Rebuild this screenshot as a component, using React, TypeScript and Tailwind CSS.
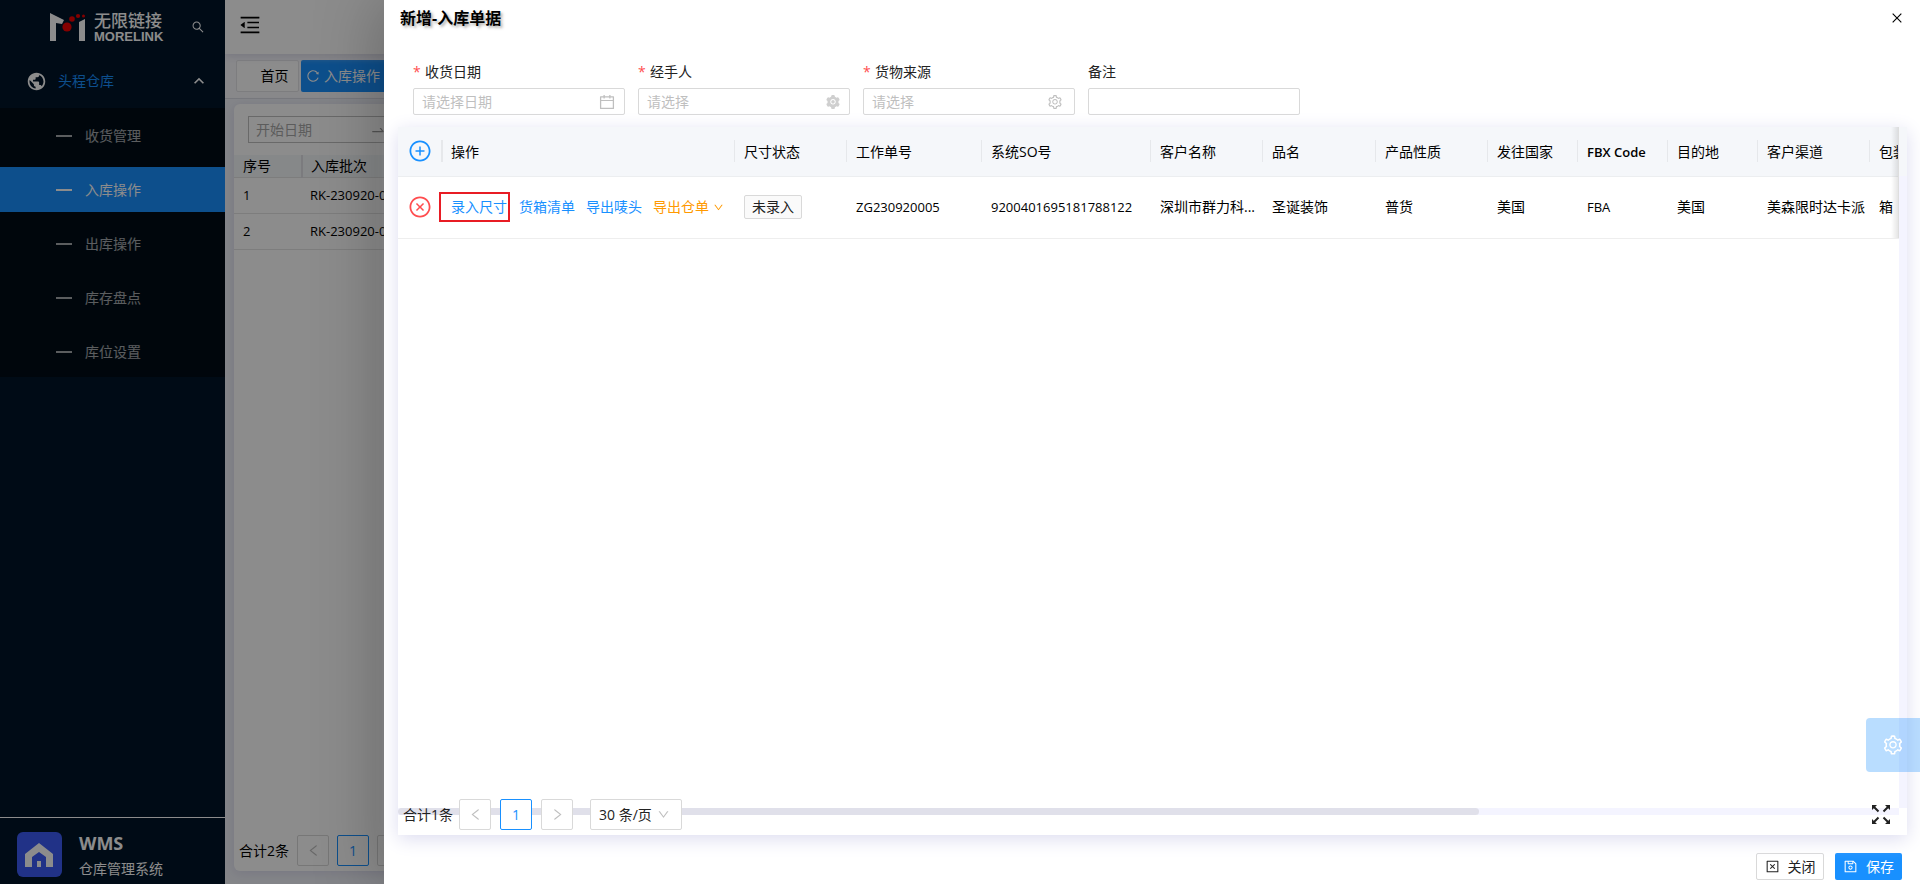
import type { ReactNode } from "react";
import {
  AiFillSetting,
  AiOutlineCalendar,
  AiOutlineClose,
  AiOutlineCloseCircle,
  AiOutlineCloseSquare,
  AiOutlineDown,
  AiOutlineLeft,
  AiOutlineMenuFold,
  AiOutlinePlusCircle,
  AiOutlineReload,
  AiOutlineRight,
  AiOutlineSave,
  AiOutlineSearch,
  AiOutlineSetting,
  AiOutlineSwapRight,
} from "react-icons/ai";
import { MdExpandLess, MdPublic } from "react-icons/md";

const menu = ["收货管理", "入库操作", "出库操作", "库存盘点", "库位设置"];

const columns = [
  { title: "尺寸状态", col: "w-[112px]" },
  { title: "工作单号", col: "w-[135px]", value: "ZG230920005" },
  { title: "系统SO号", col: "w-[169px]", value: "9200401695181788122" },
  { title: "客户名称", col: "w-[112px]", value: "深圳市群力科..." },
  { title: "品名", col: "w-[113px]", value: "圣诞装饰" },
  { title: "产品性质", col: "w-[112px]", value: "普货" },
  { title: "发往国家", col: "w-[90px]", value: "美国" },
  { title: "FBX Code", col: "w-[90px]", value: "FBA" },
  { title: "目的地", col: "w-[90px]", value: "美国" },
  { title: "客户渠道", col: "w-[112px]", value: "美森限时达卡派" },
  { title: "包装", col: "w-[112px]", value: "箱" },
];

function isLatin(text: string) {
  return /^[\w ]+$/.test(text);
}

function Logo() {
  return (
    <div className="flex items-center gap-2 text-white">
      <svg viewBox="0 0 36 28" className="h-7 w-9" fill="currentColor">
        <path d="M0 0 L14 7 L12 11 L6 10 V28 H0 Z" />
        <path d="M29 9 L35 6 V28 H29 Z" />
        <g fill="#f00000">
          <circle cx="17" cy="14" r="4.6" />
          <circle cx="22" cy="6" r="2.8" />
          <circle cx="28" cy="3" r="2.1" />
          <circle cx="33.5" cy="3" r="1.5" />
        </g>
      </svg>
      <div className="flex flex-col">
        <span className="text-[17px] leading-[18px] font-medium">无限链接</span>
        <span className="font-['Liberation_Sans'] text-[13px] leading-[13px] font-bold">
          MORELINK
        </span>
      </div>
    </div>
  );
}

function HomeIcon() {
  return (
    <svg viewBox="0 0 45 45" className="h-[45px] w-[45px] rounded-md bg-[#3c5cf6]">
      <path
        fill="#fff"
        d="M22 11 L36 22 V35 H29 V25 L22 20 L15 25 V35 H8 V22 Z M20 29 H24 V35 H20 Z"
      />
    </svg>
  );
}

function FullscreenIcon() {
  return (
    <svg viewBox="0 0 18 19" className="h-[19px] w-[18px]" fill="none" stroke="#222" strokeWidth="2">
      <path d="M2 2 L6.500 6.500 M16 2 L11.500 6.500 M2 17 L6.500 12.500 M16 17 L11.500 12.500" />
      <path
        fill="#222"
        stroke="none"
        d="M0 0 H5 L0 5 Z M18 0 V5 L13 0 Z M0 19 V14 L5 19 Z M18 19 H13 L18 14 Z"
      />
    </svg>
  );
}

function Sidebar() {
  return (
    <aside className="relative z-20 flex w-[225px] shrink-0 flex-col bg-[#001529] text-white">
      <div className="flex h-[54px] items-center justify-between pr-5 pl-[50px]">
        <Logo />
        <button aria-label="搜索">
          <AiOutlineSearch size={14} />
        </button>
      </div>
      <button className="flex h-[54px] items-center pr-4 pl-[26px] text-left text-[#1890ff]">
        <MdPublic size={21} className="text-white" />
        <span className="ml-[11px] flex-1">头程仓库</span>
        <MdExpandLess size={20} className="text-white" />
      </button>
      <nav className="flex flex-col gap-[9px] bg-[#000c17] pt-[5px] pb-[3px]">
        {menu.map((item) => (
          <a
            key={item}
            href="#"
            className={
              item === "入库操作"
                ? "flex h-[45px] items-center gap-[13px] bg-[#1890ff] pl-14 text-white"
                : "flex h-[45px] items-center gap-[13px] pl-14 text-white/65"
            }
          >
            <span className="h-[2px] w-4 bg-current" />
            {item}
          </a>
        ))}
      </nav>
      <div className="mt-auto flex items-start gap-[17px] border-t border-white px-[17px] pt-[14px] pb-[2px]">
        <HomeIcon />
        <div>
          <div className="text-[18px] leading-[23px] font-bold">WMS</div>
          <div className="leading-[27px]">仓库管理系统</div>
        </div>
      </div>
    </aside>
  );
}

function Workspace() {
  return (
    <main className="flex min-w-0 flex-1 flex-col bg-[#f0f2f8] text-black">
      <header className="z-10 flex h-[54px] items-center bg-white px-[13px] shadow-[0_2px_8px_#d8d8e8]">
        <button aria-label="收起菜单" className="-mt-1">
          <AiOutlineMenuFold size={24} />
        </button>
      </header>
      <div className="flex h-[45px] items-center gap-[2px] border-b border-[#d9dbe3] bg-[#f8f8fc] px-[11px]">
        <button className="h-8 w-[63px] rounded-[2px] border border-[#e4e4e8] bg-white pl-[14px]">首页</button>
        <button className="flex h-8 w-[110px] items-center gap-1 rounded-[2px] bg-[#1890ff] px-[5px] whitespace-nowrap text-white">
          <AiOutlineReload size={14} />
          入库操作
        </button>
      </div>
      <section className="mx-[9px] mt-[5px] mb-[13px] flex flex-1 flex-col rounded-md bg-white shadow-[0_2px_12px_#d8d8ec]">
        <div className="mt-3 ml-[14px] flex h-[27px] w-[230px] items-center border border-[#bfbfbf] px-[7px]">
          <input
            aria-label="开始日期"
            placeholder="开始日期"
            className="w-[114px] bg-transparent outline-none placeholder:text-[#a8a8a8]"
          />
          <AiOutlineSwapRight size={16} className="text-[#999]" />
        </div>
        <table className="mt-3 w-full table-fixed text-left">
          <thead>
            <tr className="h-[22px] border-b border-[#e4e4e4] bg-[#f5f7fa]">
              <th className="w-[68px] border-r-2 border-[#e0e0e6] pl-[9px] leading-5 font-normal">序号</th>
              <th className="pl-2 leading-5 font-normal">入库批次</th>
            </tr>
          </thead>
          <tbody className="text-[13px]">
            {["1", "2"].map((n) => (
              <tr key={n} className="h-9 border-b border-[#e4e4e4]">
                <td className="pl-[9px]">{n}</td>
                <td className="pl-2 whitespace-nowrap">RK-230920-00{n}</td>
              </tr>
            ))}
          </tbody>
        </table>
        <div className="mt-auto mb-[5px] flex items-center gap-2 pl-[5px]">
          <span>合计2条</span>
          <PageButton label="上一页">
            <AiOutlineLeft size={15} />
          </PageButton>
          <PageButton label="第1页" active>
            1
          </PageButton>
          <PageButton label="下一页">
            <AiOutlineRight size={15} />
          </PageButton>
        </div>
      </section>
    </main>
  );
}

function PageButton({
  label,
  active,
  children,
}: {
  label: string;
  active?: boolean;
  children: ReactNode;
}) {
  return (
    <button
      aria-label={label}
      className={
        active
          ? "flex h-[31px] w-8 items-center justify-center rounded-[2px] border border-[#1890ff] bg-white text-[#1890ff]"
          : "flex h-[31px] w-8 items-center justify-center rounded-[2px] border border-[#d9d9d9] bg-white text-[#bfbfbf]"
      }
    >
      {children}
    </button>
  );
}

function Field({
  id,
  label,
  placeholder,
  required,
  icon,
}: {
  id: string;
  label: string;
  placeholder?: string;
  required?: boolean;
  icon?: ReactNode;
}) {
  return (
    <div className="w-[212px]">
      <label htmlFor={id} className="flex h-8 items-center text-[#222]">
        {required && <span className="mr-[5px] w-[7px] text-[#ff4d4f]">*</span>}
        {label}
      </label>
      <div className="flex h-[27px] items-center rounded-[2px] border border-[#d9d9d9] bg-white px-2">
        <input
          id={id}
          placeholder={placeholder}
          className="min-w-0 flex-1 bg-transparent outline-none placeholder:text-[#bfbfbf]"
        />
        {icon}
      </div>
    </div>
  );
}

function DetailTable() {
  return (
    <table className="w-[1584px] table-fixed text-left">
      <colgroup>
        <col className="w-[45px]" />
        <col className="w-[292px]" />
        {columns.map((c) => (
          <col key={c.title} className={c.col} />
        ))}
      </colgroup>
      <thead>
        <tr className="h-[49px] border-b border-[#eceef0] bg-[#f5f7fa]">
          <th className="p-0">
            <div className="flex h-[22px] items-center border-r-2 border-[#e6e8eb] pl-[10px]">
              <button aria-label="添加" className="text-[#1890ff]">
                <AiOutlinePlusCircle size={24} />
              </button>
            </div>
          </th>
          <th className="p-0 font-normal">
            <div className="h-[22px] border-r border-[#e6e8eb] pl-2 leading-6">操作</div>
          </th>
          {columns.map((c) => (
            <th key={c.title} className="p-0 font-normal">
              <div className="h-[22px] border-r border-[#e6e8eb] pl-[9px] leading-6 whitespace-nowrap">
                {isLatin(c.title) ? <span className="text-[13px] font-semibold">{c.title}</span> : c.title}
              </div>
            </th>
          ))}
        </tr>
      </thead>
      <tbody>
        <tr className="h-[62px] border-b border-[#eee]">
          <td className="p-0 pl-[10px]">
            <button aria-label="删除" className="block text-[#ff4d4f]">
              <AiOutlineCloseCircle size={24} />
            </button>
          </td>
          <td className="p-0">
            <div className="-ml-1 flex items-center whitespace-nowrap text-[#1890ff]">
              <a href="#" className="border-2 border-[#e81c24] py-[3px] pr-px pl-[10px]">
                录入尺寸
              </a>
              <a href="#" className="ml-[9px]">货箱清单</a>
              <a href="#" className="ml-[11px]">导出唛头</a>
              <button className="ml-[11px] flex items-center gap-1 text-[#ff9900]">
                导出仓单
                <AiOutlineDown size={11} />
              </button>
            </div>
          </td>
          <td className="p-0 pl-[9px]">
            <span className="inline-block rounded-[2px] border border-[#d9d9d9] bg-[#fafafa] px-[7px] leading-[22px] text-[#222]">
              未录入
            </span>
          </td>
          {columns.slice(1).map((c) => (
            <td
              key={c.title}
              className={
                isLatin(c.value!)
                  ? "p-0 pl-[9px] text-[13px] whitespace-nowrap"
                  : "p-0 pl-[9px] whitespace-nowrap"
              }
            >
              {c.value}
            </td>
          ))}
        </tr>
      </tbody>
    </table>
  );
}

function Drawer() {
  return (
    <div
      role="dialog"
      aria-labelledby="drawer-title"
      className="absolute inset-y-0 right-0 flex w-4/5 flex-col bg-white text-black shadow-[-6px_0_60px_rgba(0,0,0,0.25)]"
    >
      <div className="flex h-9 items-center justify-between px-4">
        <h1 id="drawer-title" className="text-base font-bold [text-shadow:2px_2px_3px_#aaa]">
          新增-入库单据
        </h1>
        <button aria-label="关闭窗口">
          <AiOutlineClose size={14} />
        </button>
      </div>

      <form className="mt-5 ml-[29px] flex flex-wrap gap-[13px]">
        <Field
          id="date"
          label="收货日期"
          placeholder="请选择日期"
          required
          icon={<AiOutlineCalendar size={18} className="text-[#bfbfbf]" />}
        />
        <Field
          id="handler"
          label="经手人"
          placeholder="请选择"
          required
          icon={<AiFillSetting size={16} className="text-[#cfcfcf]" />}
        />
        <Field
          id="source"
          label="货物来源"
          placeholder="请选择"
          required
          icon={<AiOutlineSetting size={16} className="mr-[3px] text-[#bfbfbf]" />}
        />
        <Field id="remark" label="备注" />
      </form>

      <section className="relative mt-3 mr-[13px] ml-[14px] flex min-h-0 flex-1 flex-col bg-white shadow-[0_4px_18px_#dcdcf0]">
        <div className="flex min-h-0 flex-1">
          <div className="relative min-w-0 flex-1 overflow-hidden">
            <DetailTable />
            <div className="absolute top-0 right-0 h-[111px] w-2 border-r border-[#dedede] bg-linear-to-r from-transparent to-black/10" />
          </div>
          <div className="w-2 border-t-49 border-[#f5f7fa] bg-[#f4f4ff]" />
        </div>
        <div className="mr-2 h-[7px] bg-[#f4f4ff]">
          <div className="h-full w-[72%] rounded-full bg-[#e0e0ea]" />
        </div>
        <div className="h-5" />
        <div className="absolute inset-x-0 bottom-[5px] flex items-center pl-[5px]">
          <span className="w-14 text-[#222]">合计1条</span>
          <div className="flex gap-[9px]">
            <PageButton label="前一页">
              <AiOutlineLeft size={15} />
            </PageButton>
            <PageButton label="页码1" active>
              1
            </PageButton>
            <PageButton label="后一页">
              <AiOutlineRight size={15} />
            </PageButton>
          </div>
          <div className="relative ml-[17px]">
            <select
              aria-label="每页条数"
              className="h-[31px] w-[92px] appearance-none rounded-[2px] border border-[#d9d9d9] bg-white pl-2 text-[#222]"
            >
              <option>30 条/页</option>
            </select>
            <AiOutlineDown size={13} className="pointer-events-none absolute top-[9px] right-3 text-[#bfbfbf]" />
          </div>
          <button aria-label="全屏" className="mr-[17px] ml-auto">
            <FullscreenIcon />
          </button>
        </div>
      </section>

      <footer className="flex justify-end gap-[11px] pt-[18px] pr-[18px] pb-1">
        <button className="flex h-[27px] w-[68px] items-center justify-center gap-2 rounded-[2px] border border-[#d9d9d9] text-[#222]">
          <AiOutlineCloseSquare size={15} />
          关闭
        </button>
        <button className="flex h-[27px] w-[67px] items-center justify-center gap-2 rounded-[2px] bg-[#1890ff] text-white">
          <AiOutlineSave size={15} />
          保存
        </button>
      </footer>

      <button
        aria-label="设置"
        className="absolute right-0 bottom-28 flex h-[54px] w-[54px] items-center justify-center rounded-l bg-[#1890ff]/30 text-white"
      >
        <AiOutlineSetting size={22} />
      </button>
    </div>
  );
}

export default function App() {
  return (
    <div className="relative flex h-screen overflow-hidden font-['Open_Sans','Noto_Sans_CJK_SC',sans-serif] text-sm">
      <Sidebar />
      <Workspace />
      <div className="absolute inset-0 z-20 bg-black/45">
        <Drawer />
      </div>
    </div>
  );
}
